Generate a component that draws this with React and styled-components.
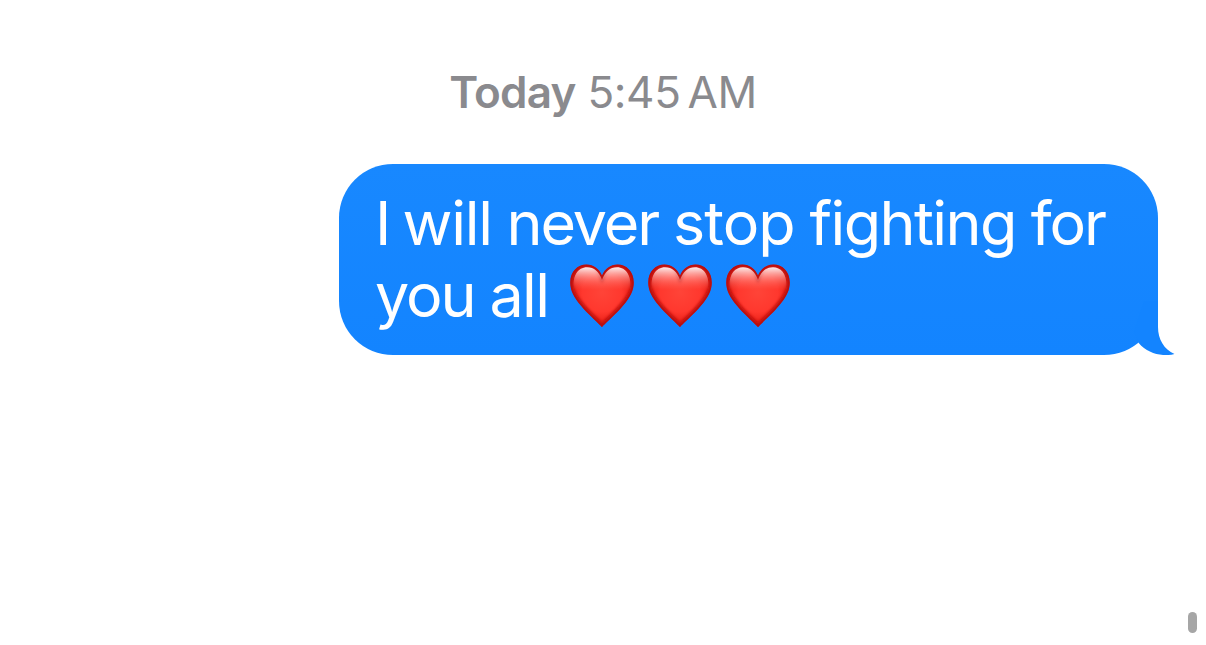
import React from 'react';
import styled, {createGlobalStyle} from 'styled-components';

const GlobalStyle = createGlobalStyle`
  body {
    margin: 0;
    background: #fff;
    overflow: hidden;
  }
`;

const Screen = styled.main`
  display: flex;
  flex-direction: column;
  box-sizing: border-box;
  height: 645px;
  padding: 64px 48px 12px 0;
  position: relative;
  background: #fff;
  font-family: Inter, "Liberation Sans", sans-serif;
`;

const Timestamp = styled.time`
  display: flex;
  justify-content: center;
  gap: 12px;
  height: 56px;
  margin: 0 0 44px 48px;
  color: #8a8a8e;
  font-size: 44px;
  line-height: 56px;
  white-space: nowrap;
`;

const Day = styled.span`
  font-weight: 580;
  letter-spacing: -0.8px;
`;

const Hour = styled.span`
  letter-spacing: -0.4px;
  word-spacing: -5px;
`;

const Bubble = styled.div`
  align-self: flex-end;
  position: relative;
  box-sizing: border-box;
  width: 819px;
  height: 191px;
  padding: 23px 0 0 36px;
  border-radius: 54px;
  background: linear-gradient(#1888ff, #1384ff);
  color: #fff;
`;

const Line = styled.div`
  display: flex;
  height: 72px;
  font-size: 61px;
  line-height: 72px;
  letter-spacing: -0.9px;
  word-spacing: -1.3px;
  white-space: nowrap;
`;

const Word = styled.span`
  letter-spacing: ${props => props.$spacing};
`;

const Hearts = styled.span`
  display: flex;
  gap: 14px;
  padding: 5px 0 0 22px;
`;

const HeartSvg = styled.svg`
  display: block;
  width: 64px;
  height: 64px;
`;

const TailSvg = styled.svg`
  position: absolute;
  right: -17px;
  bottom: 0;
  width: 71px;
  height: 54px;
`;

const ScrollThumb = styled.div`
  position: absolute;
  right: 9px;
  bottom: 12px;
  width: 9px;
  height: 21px;
  border-radius: 5px;
  background: #a6a6a6;
`;

const HEART = 'M32 63.2C28 58 4 39.500 .8 24C-2 10 6 .5 16.500 .5C23.500 .5 29 4.500 32 11.500C35 4.500 40.500 .5 47.500 .5C58 .5 66 10 63.200 24C60 39.500 36 58 32 63.200Z';

// glossy heart: dark rim, soft red body, highlights on both lobes
const HeartDefs = () => (
  <svg width="0" height="0" style={{position: 'absolute'}} aria-hidden="true">
    <defs>
      <clipPath id="heartClip"><path d={HEART} /></clipPath>
      <radialGradient id="heartBody" gradientUnits="userSpaceOnUse" cx="32" cy="28" r="36">
        <stop offset="0" stopColor="#ff4438" />
        <stop offset=".55" stopColor="#ff382e" />
        <stop offset="1" stopColor="#e0160d" />
      </radialGradient>
      <linearGradient id="heartShine" gradientUnits="userSpaceOnUse" x1="0" y1="3" x2="0" y2="26">
        <stop offset="0" stopColor="#fff" stopOpacity=".95" />
        <stop offset=".2" stopColor="#ffe4e2" stopOpacity=".75" />
        <stop offset=".55" stopColor="#ffb0aa" stopOpacity=".42" />
        <stop offset="1" stopColor="#ff7066" stopOpacity="0" />
      </linearGradient>
      <filter id="heartBlur" x="-20%" y="-20%" width="140%" height="140%">
        <feGaussianBlur stdDeviation="1.5" />
      </filter>
      <filter id="shineBlur" x="-20%" y="-20%" width="140%" height="140%">
        <feGaussianBlur stdDeviation=".6" />
      </filter>
    </defs>
  </svg>
);

const Heart = () => (
  <HeartSvg viewBox="0 0 64 64" role="img" aria-label="red heart">
    <g clipPath="url(#heartClip)">
      <path d={HEART} fill="url(#heartBody)" />
      <path d={HEART} fill="none" stroke="#b80a08" strokeWidth="6" filter="url(#heartBlur)" />
      <path
        d="M4 27C1.500 12 8 3.200 17 3.200C24 3.200 29 7.500 32 16C35 7.500 40 3.200 47 3.200C56 3.200 62.500 12 60 27Z"
        fill="url(#heartShine)" filter="url(#shineBlur)"
      />
    </g>
  </HeartSvg>
);

const Tail = () => (
  <TailSvg viewBox="0 0 71 54" aria-hidden="true">
    <path d="M40 0H54V26C54 38 60 48.500 70.500 53C59 56 44 53 34.700 42L30 30Z" fill="#1384ff" />
  </TailSvg>
);

const App = () => (
  <>
    <GlobalStyle />
    <HeartDefs />
    <Screen>
      <Timestamp>
        <Day>Today</Day>
        <Hour>5:45 AM</Hour>
      </Timestamp>
      <Bubble>
        <Line>
          <span>
            <Word $spacing="-3.8px">I</Word>{' '}
            <Word $spacing="-1.3px">will</Word>{' '}
            <Word $spacing="-2.1px">never</Word>{' '}
            <Word $spacing="-1px">stop</Word>{' '}
            <Word $spacing="-1.6px">fighting</Word>{' '}
            <Word $spacing="-2px">for</Word>
          </span>
        </Line>
        <Line>
          <span>
            <Word $spacing="-2.1px">you</Word>{' '}
            <Word $spacing="-1.6px">all</Word>
          </span>
          <Hearts>
            <Heart />
            <Heart />
            <Heart />
          </Hearts>
        </Line>
        <Tail />
      </Bubble>
      <ScrollThumb />
    </Screen>
  </>
);

export default App;
